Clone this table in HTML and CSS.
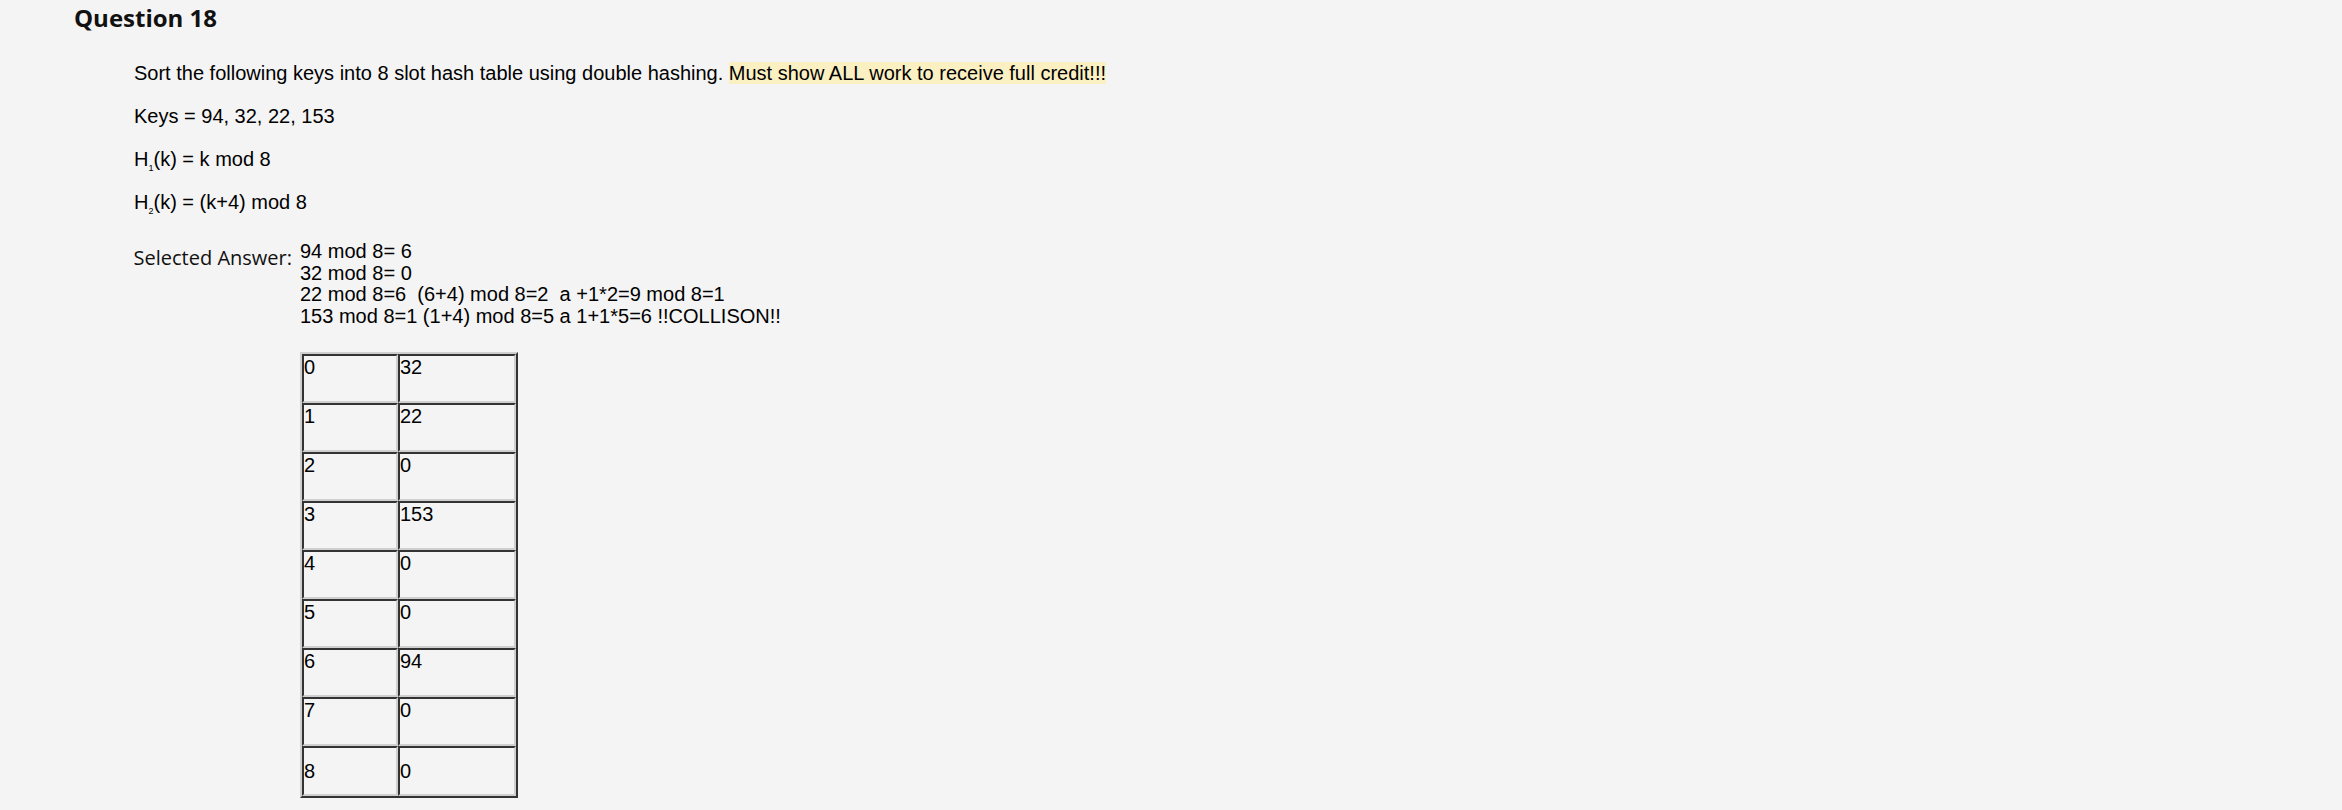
FILE: index.html
```html
<!DOCTYPE html>
<html lang="en">
<head>
    <meta charset="UTF-8">
    <meta name="viewport" content="width=device-width, initial-scale=1.0">
    <title>Question 18</title>
    <link rel="stylesheet" href="styles.css">
</head>
<body>
    <div class="question">
        <h2 class="question-title">Question 18</h2>

        <div class="question-body">
            <p>Sort the following keys into 8 slot hash table using double hashing. <span class="highlight">Must show ALL work to receive full credit!!!</span></p>
            <p>Keys = 94, 32, 22, 153</p>
            <p>H<sub>1</sub>(k) = k mod 8</p>
            <p>H<sub>2</sub>(k) = (k+4) mod 8</p>
        </div>

        <div class="answer">
            <div class="answer-label">Selected Answer:</div>
            <div class="answer-text">
                <div class="work">
                    <div>94 mod 8= 6</div>
                    <div>32 mod 8= 0</div>
                    <div>22 mod 8=6 &nbsp;(6+4) mod 8=2 &nbsp;a +1*2=9 mod 8=1</div>
                    <div>153 mod 8=1 (1+4) mod 8=5 a 1+1*5=6 !!COLLISON!!</div>
                </div>

                <table class="hash-table">
                    <tr><td>0</td><td>32</td></tr>
                    <tr><td>1</td><td>22</td></tr>
                    <tr><td>2</td><td>0</td></tr>
                    <tr><td>3</td><td>153</td></tr>
                    <tr><td>4</td><td>0</td></tr>
                    <tr><td>5</td><td>0</td></tr>
                    <tr><td>6</td><td>94</td></tr>
                    <tr><td>7</td><td>0</td></tr>
                    <tr class="last-row"><td>8</td><td>0</td></tr>
                </table>
            </div>
        </div>
    </div>
</body>
</html>
```

FILE: styles.css
```css
body {
    margin: 0;
    background-color: #f4f4f4;
    color: #000;
    font-family: "Liberation Sans", Arial, sans-serif;
}
.question {
    padding: 1px 0 0 74px;
}
.question-title {
    margin: 0;
    font-family: "Open Sans", sans-serif;
    font-size: 24px;
    font-weight: 700;
    color: #111;
}
.question-body {
    padding: 28px 0 0 60px;
    font-size: 20px;
}
.question-body p {
    margin: 0 0 20px 0;
}
.question-body p:last-child {
    margin-bottom: 0;
}
sub {
    font-size: 9px;
    vertical-align: -5px;
    line-height: 0;
}
.highlight {
    background-color: #fbf0c2;
}
.answer {
    display: flex;
    margin-top: 27px;
    padding-left: 58px;
}
.answer-label {
    width: 160px;
    padding-top: 3px;
    padding-right: 8px;
    text-align: right;
    font-family: "Open Sans", sans-serif;
    font-size: 20px;
    color: #111;
}
.answer-text {
    font-size: 20px;
}
.work {
    line-height: 21.5px;
}
.hash-table {
    margin-top: 25px;
    border-collapse: separate;
    border-spacing: 0;
    border: 2px solid;
    border-color: #cfcfcf #333 #333 #cfcfcf;
}
.hash-table td {
    height: 45px;
    padding: 0;
    vertical-align: top;
    border: 2px solid;
    border-color: #333 #cfcfcf #cfcfcf #333;
    line-height: 23px;
}
.hash-table td:first-child {
    width: 92px;
}
.hash-table td:last-child {
    width: 114px;
}
.hash-table .last-row td {
    height: 46px;
    vertical-align: middle;
}
```
